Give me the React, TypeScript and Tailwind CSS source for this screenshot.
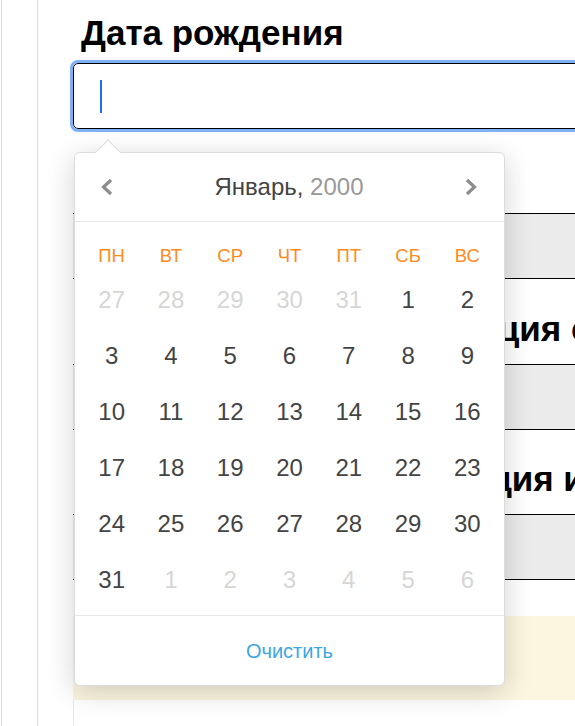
import { ReactNode } from "react";

const WEEKDAYS = ["ПН", "ВТ", "СР", "ЧТ", "ПТ", "СБ", "ВС"];

interface DayCell {
  day: number;
  muted: boolean;
}

function buildDays(): DayCell[] {
  const days: DayCell[] = [];
  for (let d = 27; d <= 31; d++) days.push({ day: d, muted: true });
  for (let d = 1; d <= 31; d++) days.push({ day: d, muted: false });
  for (let d = 1; d <= 6; d++) days.push({ day: d, muted: true });
  return days;
}

function Chevron({ dir }: { dir: "left" | "right" }) {
  return (
    <svg width="14" height="20" viewBox="0 0 14 20" fill="none">
      <polyline
        points={dir === "left" ? "11,3 3.5,10 11,17" : "3,3 10.5,10 3,17"}
        stroke="#8c8c8c"
        strokeWidth="3.2"
      />
    </svg>
  );
}

function SectionTitle({ children, className = "" }: { children: ReactNode; className?: string }) {
  return (
    <h2 className={`whitespace-nowrap text-[35px] font-bold leading-[40px] text-black ${className}`}>
      {children}
    </h2>
  );
}

function GrayField({ className = "" }: { className?: string }) {
  return <div className={`h-[66px] border-y border-black bg-[#ebebeb] ${className}`} />;
}

function DatePopup() {
  const days = buildDays();
  return (
    <div className="absolute left-[1px] top-[152px] w-[431px] rounded-[6px] border border-[#dcdcdc] bg-white shadow-[0_6px_28px_rgba(0,0,0,0.18)]">
      <div className="absolute left-[24px] top-[-10px] h-[18px] w-[18px] rotate-45 border-l border-t border-[#dcdcdc] bg-white" />
      <div className="relative flex h-[69px] items-center justify-between border-b border-[#e8e8e8] pl-[25px] pr-[26px]">
        <Chevron dir="left" />
        <div className="text-[24px] text-[#444]">
          Январь, <span className="text-[#999]">2000</span>
        </div>
        <Chevron dir="right" />
      </div>
      <div className="grid grid-cols-7 px-[7px] pt-[18px] pb-[7px]">
        {WEEKDAYS.map((w) => (
          <div key={w} className="flex h-[32px] items-center justify-center text-[18.5px] text-[#ff8b1d]">
            {w}
          </div>
        ))}
        {days.map((d, i) => (
          <div
            key={i}
            className={`flex h-[56px] items-center justify-center text-[24px] ${
              d.muted ? "text-[#d6d6d6]" : "text-[#444]"
            }`}
          >
            {d.day}
          </div>
        ))}
      </div>
      <div className="flex h-[70px] items-center justify-center border-t border-[#e8e8e8] text-[20px] text-[#3da7e2]">
        Очистить
      </div>
    </div>
  );
}

export default function App() {
  return (
    <div
      className="h-[726px] w-[575px] overflow-hidden bg-white pl-px"
      style={{ fontFamily: '"Liberation Sans", Arial, sans-serif' }}
    >
      <div className="h-full border-l border-[#dcdcdc] pl-[35px]">
        <div className="h-full border-l border-[#dcdcdc] pl-[35px]">
          <div className="relative w-[640px]">
            <SectionTitle className="px-2 pt-[13px]">Дата рождения</SectionTitle>
            <div className="mt-[10px] flex h-[66px] items-center rounded-[5px] border border-black pl-[26px] outline outline-[3px] outline-[#80b1f5]">
              <div className="h-[33px] w-[2px] bg-[#1a6ff2]" />
            </div>

            <GrayField className="mt-[84px]" />
            <SectionTitle className="mt-[30px] px-2">Миграционная регистрация с 2020 года</SectionTitle>
            <GrayField className="mt-[15px]" />
            <SectionTitle className="mt-[29px] pl-[14px]">Медицинская информация и полис</SectionTitle>
            <GrayField className="mt-[15px]" />

            <div className="mt-[36px] h-[84px] bg-[#fcf6e0]" />
            <div className="h-[60px] border-l border-[#f3eac4]" />

            <DatePopup />
          </div>
        </div>
      </div>
    </div>
  );
}
